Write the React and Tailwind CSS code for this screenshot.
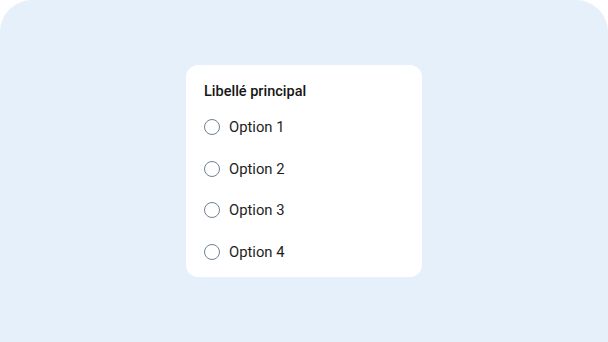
export default function App() {
  const options = ["Option 1", "Option 2", "Option 3", "Option 4"];
  return (
    <div className="w-[608px] h-[342px] bg-white">
      <div className="w-full h-full bg-[#e6f0fb] rounded-t-[32px] flex items-center justify-center" style={{ fontFamily: 'Roboto, "Noto Sans", sans-serif' }}>
        <div className="w-[236px] h-[212px] bg-white rounded-[12px] pl-[18px] pr-4 pt-[17px] flex flex-col">
          <div className="text-[14.5px] leading-5 font-medium text-[#161616]">Libellé principal</div>
          <div className="mt-[4px] flex flex-col">
            {options.map((o) => (
              <label key={o} className="h-[41.8px] flex items-center gap-[9px]">
                <span className="w-4 h-4 rounded-full border-[1.5px] border-[#6f8197] bg-white shrink-0" />
                <span className="text-[14.8px] leading-5 text-[#1e1e1e]">{o}</span>
              </label>
            ))}
          </div>
        </div>
      </div>
    </div>
  );
}
